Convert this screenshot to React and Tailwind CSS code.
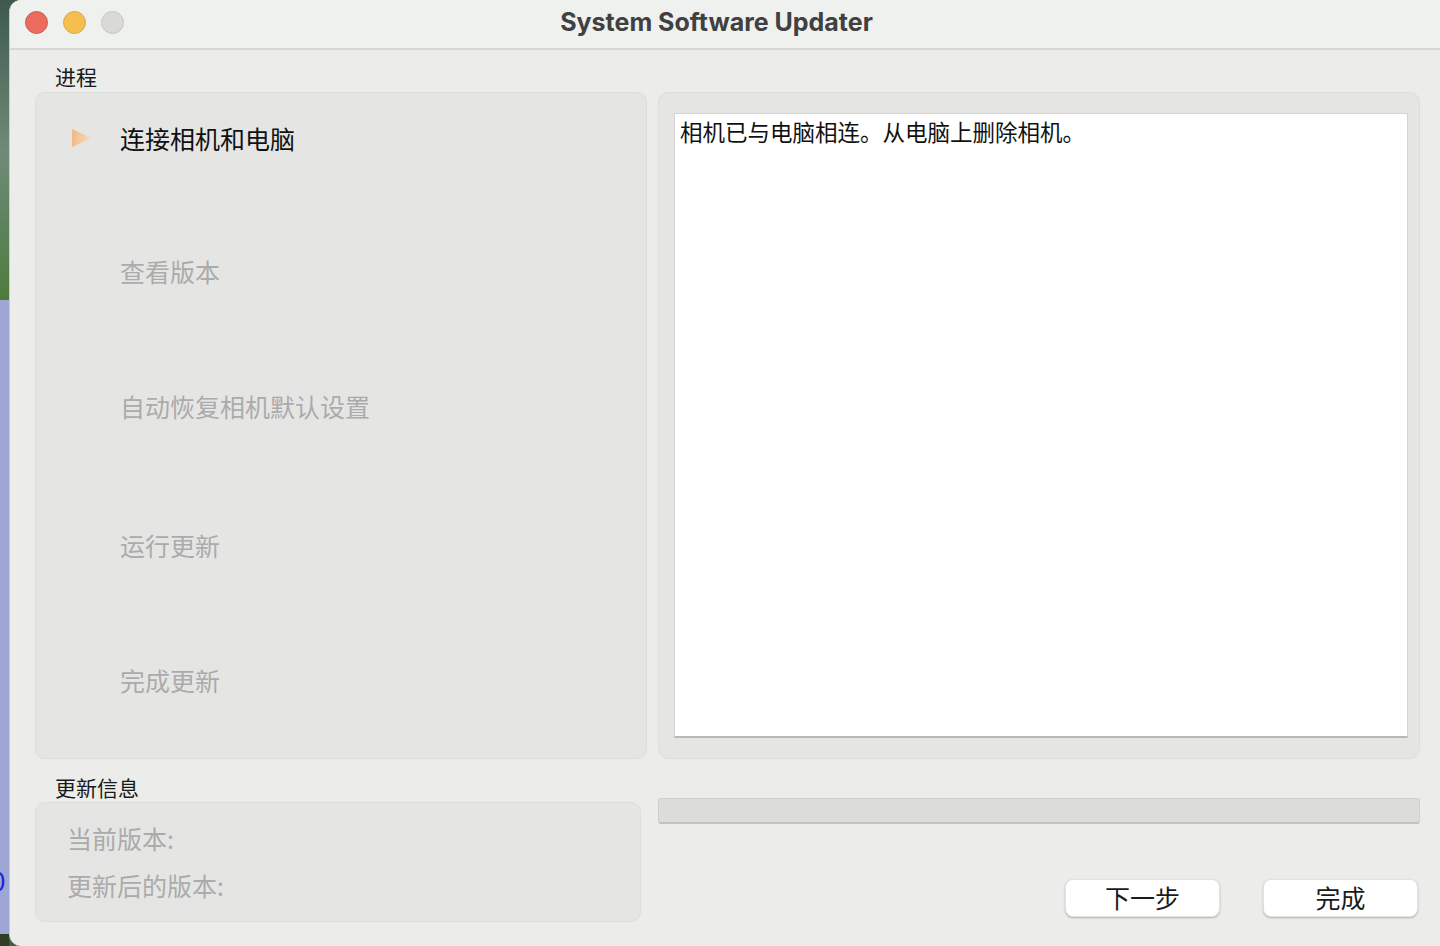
import React from "react";

const cjk = { fontFamily: '"Noto Sans CJK SC", "Noto Sans", sans-serif' };

const steps = [
  { label: "连接相机和电脑", active: true, mt: "mt-[30px]" },
  { label: "查看版本", active: false, mt: "mt-[103px]" },
  { label: "自动恢复相机默认设置", active: false, mt: "mt-[105px]" },
  { label: "运行更新", active: false, mt: "mt-[109px]" },
  { label: "完成更新", active: false, mt: "mt-[105px]" },
];

const Arrow = () => (
  <svg width="22" height="22" viewBox="0 0 22 22" className="shrink-0">
    <defs>
      <linearGradient id="arr" x1="0" y1="0" x2="1" y2="0">
        <stop offset="0" stopColor="#f2b987" />
        <stop offset="1" stopColor="#f9dcc2" />
      </linearGradient>
    </defs>
    <polygon points="1,2 21,11 1,20" fill="url(#arr)" />
  </svg>
);

const Desktop = () => (
  <div className="w-[9px] shrink-0 flex flex-col overflow-hidden">
    <div className="h-[300px] bg-gradient-to-b from-[#3e5a4c] via-[#6f8a7a] to-[#4d7c3a]" />
    <div className="flex-1 bg-[#9ea6d5] flex flex-col justify-end pb-[40px]">
      <span className="text-[26px] leading-[28px] text-[#1d22e6] -ml-[9px]" style={cjk}>
        0
      </span>
    </div>
    <div className="h-[12px] bg-[#2f3d22]" />
  </div>
);

export default function App() {
  return (
    <div className="w-[1440px] h-[946px] flex overflow-hidden bg-[#3e5a4c]">
      <Desktop />
      <div className="flex-1 flex flex-col bg-[#ecedeb] rounded-tl-[12px] rounded-bl-[12px] border-l border-[#c9cbc8] overflow-hidden">
        {/* title bar */}
        <div className="h-[50px] shrink-0 relative flex items-center justify-center bg-[#eff1ee] border-b-2 border-[#d6d8d5]">
          <div className="absolute left-[15px] top-[11px] flex gap-[15px]">
            <div className="w-[23px] h-[23px] rounded-full bg-[#ec6a5e] border border-[#d65a4f]" />
            <div className="w-[23px] h-[23px] rounded-full bg-[#f4bf4f] border border-[#dca83c]" />
            <div className="w-[23px] h-[23px] rounded-full bg-[#d9dad8] border border-[#c5c6c4]" />
          </div>
          <span
            className="text-[25px] leading-[30px] font-bold text-[#404040] ml-[-17px] mt-[-4px]"
            style={{ fontFamily: "Inter, 'Liberation Sans', sans-serif" }}
          >
            System Software Updater
          </span>
        </div>

        <div className="flex-1 flex flex-col pl-[25px] pr-[20px]" style={cjk}>
          <div className="pt-[14px] pl-[20px] text-[21px] leading-[24px] text-[#1a1a1a]">进程</div>

          <div className="mt-[4px] flex gap-[11px] h-[667px]">
            <div className="w-[612px] rounded-[10px] bg-[#e5e6e4] border border-[#dcdedb] flex flex-col">
              {steps.map((s) => (
                <div key={s.label} className={`${s.mt} flex items-center h-[30px]`}>
                  <div className="w-[84px] flex justify-start pl-[35px]">
                    {s.active && <Arrow />}
                  </div>
                  <span
                    className={`text-[25px] leading-[30px] ${
                      s.active ? "text-[#111111]" : "text-[#ababab]"
                    }`}
                  >
                    {s.label}
                  </span>
                </div>
              ))}
            </div>

            <div className="flex-1 rounded-[10px] bg-[#e5e6e4] border border-[#dcdedb] pt-[20px] pl-[15px] pr-[11px] pb-[20px] flex">
              <div className="flex-1 bg-white border border-[#d4d5d3] border-b-2 border-b-[#b9bab8] pl-[5px] pt-[2px]">
                <p className="text-[22.5px] leading-[30px] text-[#111111]">
                  相机已与电脑相连。从电脑上删除相机。
                </p>
              </div>
            </div>
          </div>

          <div className="flex gap-[17px]">
            <div className="w-[606px] flex flex-col">
              <div className="mt-[16px] pl-[20px] text-[21px] leading-[24px] text-[#1a1a1a]">更新信息</div>
              <div className="mt-[3px] h-[120px] rounded-[10px] bg-[#e5e6e4] border border-[#dcdedb] pl-[31px] pt-[20px] flex flex-col gap-[17px] text-[25px] leading-[30px] text-[#ababab]">
                <span>当前版本:</span>
                <span>更新后的版本:</span>
              </div>
            </div>

            <div className="flex-1 flex flex-col">
              <div className="mt-[39px] h-[26px] rounded-[3px] bg-[#dcdddb] border border-[#d0d1cf] border-b-2 border-b-[#c2c3c1]" />
              <div className="mt-[55px] flex justify-end gap-[43px] pr-[2px]">
                <button className="w-[155px] h-[38px] rounded-[8px] bg-white shadow-[0_1px_2px_rgba(0,0,0,0.25)] border border-[#e2e3e1] text-[25px] leading-[30px] text-[#1a1a1a] pb-[3px]">
                  下一步
                </button>
                <button className="w-[155px] h-[38px] rounded-[8px] bg-white shadow-[0_1px_2px_rgba(0,0,0,0.25)] border border-[#e2e3e1] text-[25px] leading-[30px] text-[#1a1a1a] pb-[3px]">
                  完成
                </button>
              </div>
            </div>
          </div>
        </div>
      </div>
    </div>
  );
}
